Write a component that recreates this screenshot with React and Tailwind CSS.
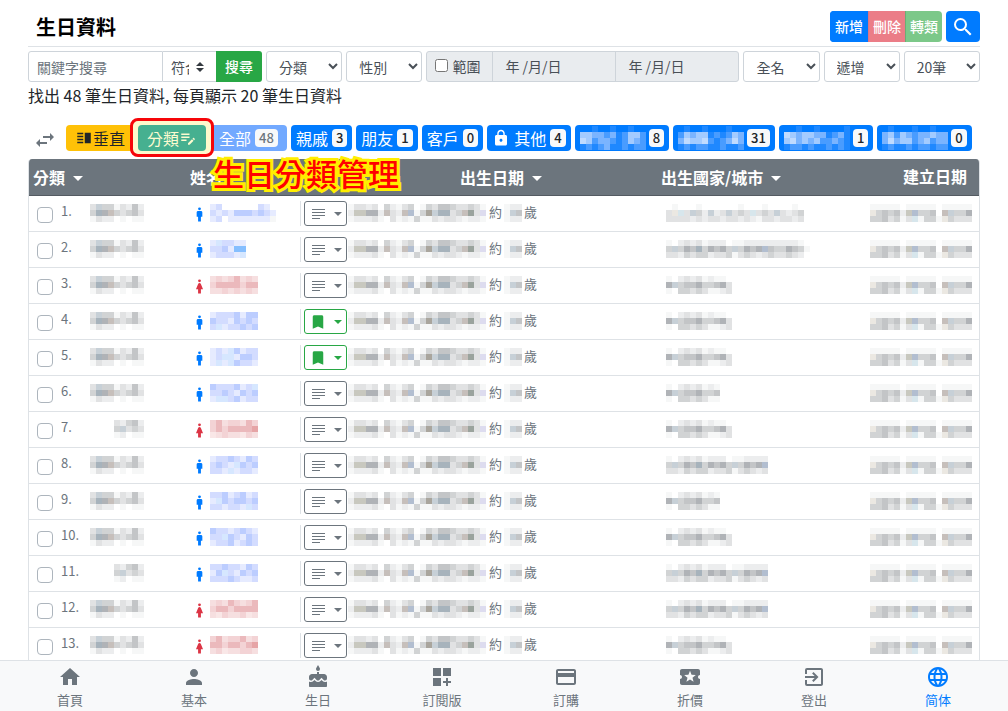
import React from "react";
import {
  MdBookmark,
  MdCake,
  MdCreditCard,
  MdDashboardCustomize,
  MdEditNote,
  MdExitToApp,
  MdHome,
  MdLanguage,
  MdLocalActivity,
  MdLock,
  MdMan,
  MdPerson,
  MdSearch,
  MdSwapHoriz,
  MdVerticalSplit,
  MdWoman
} from "react-icons/md";

// One letter per 6px tile, "." leaves the tile empty
const TILES = {
  a: "#f6f7f7", b: "#ecedee", c: "#e1e2e3", d: "#d1d3d4", e: "#c3c5c7", f: "#b0b3b7",
  g: "#c7d0d7", h: "#a7b3bc", i: "#c6bfbb", j: "#ebe8e2", k: "#d7e6ec", l: "#b2bed0",
  m: "#c8c8bf", n: "#9aa39d", o: "#a9a59d", u: "#dddcef",
  1: "#e6ebff", 2: "#d3dcff", 3: "#bccdff", 4: "#86bfff", 5: "#d6e7ff",
  p: "#f9e7e7", q: "#f3d3d5", r: "#ebb9bc", s: "#f6dfe0", t: "#e6a4a6",
  v: "#c0dbff", w: "#a3cbff", x: "#7ab4ff", y: "#499cff", z: "#1f88ff"
};

const CATEGORY = ["cgddacbeb", "dhfidcdec", "acbb.a.aa"];
const CATEGORY_SHORT = ["cbdeb", "dgcdc", "ab.aa"];
const BIRTH = ["accbc.dbacd.adceedccdca", "bmmffbicbiladoghhcdincu", "abbbca.cabadaacbccbabba"];
const AGE = ["abb", "age", "abb"];
const CREATED = ["aaaaa.aaaaa.aaaaa", "jdedebmldde.igddf", "ddecdackaddajdccc"];
const CITY_LIGHT = [".a...a......a...a....a.", "cjkcgdbgbcgcdckcdcgcbcd", "ccccbcbccbccbcbaccbccbc"];
const CITY_DARK = ["a.bcbcabbb.aabbbbbbbbba.", "dgdfehdfefdgdfefleddfeda", "ccbdcddbccdacdcbcdccdcb."];
const AREA = ["a.bcbcabaa.", "fgdeefddefc", "a.ddcdcaabc"];

const people = [
  { city: CITY_LIGHT, name: ["12......21.", "21213332321", "12.1111111a"] },
  { city: CITY_DARK, name: ["152211", "223144", "122215"] },
  { female: true, city: AREA, name: ["sqsqrsqs", "qrrrrqrr", "ssqsqsqs"] },
  { marked: true, city: AREA, name: ["12223133", "32213232", "25122323"] },
  { marked: true, city: AREA, name: ["12153122", "12551332", "15153221"] },
  { city: AREA, width: 9, name: ["32223125", "22321323", "15523122"] },
  { short: true, female: true, city: AREA, name: ["qrsqqsrq", "qrqrrrrt", "psqsspqs"] },
  { city: CITY_DARK, width: 17, name: ["12232132", "23215323", "22151221"] },
  { city: AREA, width: 9, name: ["22312312", "15323323", "22122152"] },
  { city: AREA, name: ["32212321", "22532132", "12231232"] },
  { short: true, city: CITY_DARK, width: 17, name: ["22322132", "13521323", "22232112"] },
  { female: true, city: CITY_DARK, width: 17, name: ["sqsrqsqr", "qrrqrrrr", "spqssqps"] },
  { female: true, city: AREA, name: ["qrsqqrsq", "rrqrrqrt", "sqpssqqs"] }
];

const tags = [
  { label: "親戚", count: 3 },
  { label: "朋友", count: 1 },
  { label: "客戶", count: 0 },
  { label: "其他", count: 4, locked: true },
  { count: 8, tiles: ["..z..z..z..", "wwxxyxzywwy", "vwyxxyzywxy", "zyzyxzzyzyy"] },
  { count: 31, tiles: [".z..z...z..", "ywxwwzyzywx", "xvwwvyzyxvx", "zyzyyzzyzzy"] },
  { count: 1, tiles: ["..z..z....z", "vwxwwxxzyxz", "wvxwxwyyxyz", "zyyzyzzyzyz"] },
  { count: 0, tiles: [".z...z..z..", "xwywxyxxwxx", "xvxwwyxwyxx", "zyzzyzyyzyy"] }
];

const nav = [
  { label: "首頁", icon: MdHome },
  { label: "基本", icon: MdPerson },
  { label: "生日", icon: MdCake },
  { label: "訂閱版", icon: MdDashboardCustomize },
  { label: "訂購", icon: MdCreditCard },
  { label: "折價", icon: MdLocalActivity },
  { label: "登出", icon: MdExitToApp },
  { label: "简体", icon: MdLanguage, active: true }
];

function Mosaic({ rows, className = "" }) {
  const cols = rows[0].length;
  return (
    <svg
      width={cols * 6}
      height={rows.length * 6}
      shapeRendering="crispEdges"
      aria-hidden="true"
      className={`shrink-0 ${className}`}
    >
      {rows.map((row, y) =>
        [...row].map((tile, x) =>
          tile === "." ? null : (
            <rect key={`${x}-${y}`} x={x * 6} y={y * 6} width="6" height="6" fill={TILES[tile]} />
          )
        )
      )}
    </svg>
  );
}

function Caret({ className = "" }) {
  return (
    <svg viewBox="0 0 10 5" className={`inline-block fill-current ${className}`} aria-hidden="true">
      <path d="M0 0h10L5 5z" />
    </svg>
  );
}

function FilterSelect({ label, options }) {
  return (
    <select
      aria-label={label}
      className="h-[31px] flex-1 min-w-0 rounded-[3px] border border-[#ced4da] bg-white px-2 text-sm text-[#495057]"
    >
      {options.map((option) => (
        <option key={option}>{option}</option>
      ))}
    </select>
  );
}

function Badge({ children }) {
  return (
    <span className="h-[18px] rounded bg-[#f8f9fa] px-1 text-[13px] leading-[18px] font-medium text-[#212529]">
      {children}
    </span>
  );
}

export default function App() {
  return (
    <div className="h-screen flex flex-col bg-white text-[#212529] font-['Noto_Sans_CJK_TC','Noto_Sans',sans-serif]">
      <main className="flex-1 min-h-0 overflow-y-auto [scrollbar-width:none] px-7 pt-[11px]">
        {/* Title and actions */}
        <header className="flex items-center justify-between border-b border-[#dee2e6] pb-1">
          <h1 className="pl-2 text-xl leading-[31px] font-bold text-black">生日資料</h1>
          <div className="flex gap-1 text-sm font-medium text-white">
            <div className="flex h-[31px] overflow-hidden rounded">
              <button className="border border-[#007bff] bg-[#007bff] px-1 pb-0.5">新增</button>
              <button className="border-l border-[#e07682] bg-[#eb7d87] px-1 pb-0.5">刪除</button>
              <button className="border-l border-[#6bae75] bg-[#7cc889] px-1 pb-0.5">轉類</button>
            </div>
            <button aria-label="搜尋" className="flex h-[31px] w-[34px] items-center justify-center rounded bg-[#007bff]">
              <MdSearch className="size-6" />
            </button>
          </div>
        </header>

        {/* Filters */}
        <form className="mt-1 flex gap-1 text-sm text-[#495057]" onSubmit={(e) => e.preventDefault()}>
          <div className="flex h-[31px] w-[234px]">
            <input
              aria-label="關鍵字搜尋"
              placeholder="關鍵字搜尋"
              className="min-w-0 flex-1 rounded-l-[3px] border border-[#ced4da] px-2 placeholder:text-[#6c757d]"
            />
            <div className="relative w-[53px] border-y border-[#ced4da]">
              <select aria-label="比對方式" className="h-full w-[26px] appearance-none overflow-hidden pl-2">
                <option>符合</option>
              </select>
              <svg viewBox="0 0 8 10" className="pointer-events-none absolute top-2.5 right-3 h-2.5 w-2 fill-[#343a40]">
                <path d="M4 0l4 4H0zM0 6h8l-4 4z" />
              </svg>
            </div>
            <button className="w-[46px] rounded-r-[3px] bg-[#28a745] pb-0.5 font-medium text-white">搜尋</button>
          </div>
          <FilterSelect label="分類" options={["分類"]} />
          <FilterSelect label="性別" options={["性別", "男", "女"]} />
          <div className="flex h-[31px] w-[313px] rounded-[3px] border border-[#ced4da] bg-[#e9ecef]">
            <label className="flex w-[66px] items-center gap-1 border-r border-[#ced4da] pb-0.5 pl-2">
              <input type="checkbox" className="size-[13px]" />
              範圍
            </label>
            <input aria-label="開始日期" disabled defaultValue="年 /月/日" className="min-w-0 flex-1 border-r border-[#ced4da] px-3 pb-0.5" />
            <input aria-label="結束日期" disabled defaultValue="年 /月/日" className="min-w-0 flex-1 px-3 pb-0.5" />
          </div>
          <FilterSelect label="姓名格式" options={["全名"]} />
          <FilterSelect label="排序" options={["遞增", "遞減"]} />
          <FilterSelect label="每頁筆數" options={["20筆"]} />
        </form>

        <p className="mt-px text-base leading-6">找出 48 筆生日資料, 每頁顯示 20 筆生日資料</p>

        {/* Category tags */}
        <div className="mt-[18px] flex h-[26px] gap-1 whitespace-nowrap text-base leading-[26px] text-white">
          <button aria-label="切換" className="flex w-[34px] items-center justify-center pt-1 text-[#6c757d]">
            <MdSwapHoriz className="size-6" />
          </button>
          <button className="flex items-center rounded bg-[#ffc107] px-[9px] text-[#212529]">
            <MdVerticalSplit className="size-[18px]" />
            垂直
          </button>
          <div className="relative z-10">
            <span className="absolute -inset-x-2 -top-[7px] -bottom-1.5 rounded-lg border-3 border-[#f60509] bg-[#fff9cc]" />
            <button className="relative flex h-[26px] items-center rounded bg-[#46b090] px-[9px] text-[#fdfbd0]">
              分類
              <MdEditNote className="size-[18px]" />
            </button>
            <strong className="pointer-events-none absolute top-[26px] left-[75px] text-[31px] leading-[44px] font-medium text-[#ff0000] [-webkit-text-stroke:6px_#ffee00] [paint-order:stroke_fill] [stroke-linejoin:round]">
              生日分類管理
            </strong>
          </div>
          <button className="flex items-center gap-1 rounded bg-[#72a9ff] px-[9px]">
            全部
            <span className="h-[18px] rounded bg-[#f8f9fa] px-1 text-[13px] leading-[18px] font-medium text-[#6c757d]">48</span>
          </button>
          {tags.map((tag, index) =>
            tag.tiles ? (
              <button key={index} aria-label={`分類 ${tag.count}`} className="flex items-center gap-[3px] rounded bg-[#007bff] px-[5px]">
                <Mosaic rows={tag.tiles} />
                <Badge>{tag.count}</Badge>
              </button>
            ) : (
              <button key={index} className="flex items-center gap-1 rounded bg-[#007bff] px-[5px]">
                {tag.locked && <MdLock className="size-[18px]" />}
                {tag.label}
                <Badge>{tag.count}</Badge>
              </button>
            )
          )}
        </div>

        {/* Birthday list */}
        <div className="mt-2 overflow-hidden rounded-t border-x border-[#dee2e6]">
          <table className="w-full table-fixed border-collapse text-[13px] text-[#6c757d]">
            <colgroup>
              <col className="w-[156px]" />
              <col className="w-[115px]" />
              <col className="w-[356px]" />
              <col />
              <col className="w-[115px]" />
            </colgroup>
            <thead className="bg-[#6c757d] text-left text-base text-white">
              <tr className="h-9 border-b border-[#545b62]">
                <th className="pl-1 font-bold">分類 <Caret className="ml-1 mb-0.5 h-[5px] w-2.5" /></th>
                <th className="pl-[5px] font-bold">姓名</th>
                <th className="pl-40 font-bold">出生日期 <Caret className="ml-1 mb-0.5 h-[5px] w-2.5" /></th>
                <th className="pl-[5px] font-bold">出生國家/城市 <Caret className="ml-1 mb-0.5 h-[5px] w-2.5" /></th>
                <th className="pr-3 pb-0.5 text-right font-bold">建立日期</th>
              </tr>
            </thead>
            <tbody>
              {people.map((person, index) => (
                <tr key={index} className="h-9 border-b border-[#dee2e6] align-top">
                  <td className="pt-2">
                    <div className="flex pl-2">
                      <input
                        type="checkbox"
                        aria-label={`選取 ${index + 1}`}
                        className="mt-[3px] size-4 appearance-none rounded border border-[#adb5bd] bg-white"
                      />
                      <span className="w-[29px] pl-2 leading-[14px]">{index + 1}.</span>
                      {person.short ? (
                        <Mosaic rows={CATEGORY_SHORT} className="ml-8" />
                      ) : (
                        <Mosaic rows={CATEGORY} className="ml-2" />
                      )}
                    </div>
                  </td>
                  <td className="pt-2">
                    <div className="flex gap-0.5 pl-1.5">
                      {person.female ? (
                        <MdWoman className="mt-0.5 size-[17px] text-[#dc3545]" />
                      ) : (
                        <MdMan className="mt-0.5 size-[17px] text-[#007bff]" />
                      )}
                      <Mosaic rows={person.name} />
                    </div>
                  </td>
                  <td className="pt-[5px]">
                    <div className="flex h-[25px] items-center border-l border-[#dee2e6] pl-[3px]">
                      <button
                        aria-label="標記"
                        className={`mr-px flex h-[25px] w-[43px] items-center justify-between rounded-[3px] border pl-1 pr-1 ${
                          person.marked ? "border-[#28a745] text-[#28a745]" : "border-[#6c757d]"
                        }`}
                      >
                        {person.marked ? (
                          <MdBookmark className="mt-0.5 size-[18px]" />
                        ) : (
                          <svg viewBox="0 0 18 18" shapeRendering="crispEdges" className="mt-0.5 size-[18px] fill-current">
                            <path d="M3 4h13v1H3zM3 7h13v1H3zM3 10h13v1H3zM3 13h8v1H3z" />
                          </svg>
                        )}
                        <Caret className="mt-0.5 h-1 w-2" />
                      </button>
                      <Mosaic rows={BIRTH} />
                      <span className="pb-0.5 pl-[3px] leading-4">約</span>
                      <Mosaic rows={AGE} className="mx-0.5" />
                      <span className="pb-0.5 leading-4">歲</span>
                    </div>
                  </td>
                  <td className="pt-2 pl-2.5">
                    <Mosaic rows={person.width ? person.city.map((r) => r.slice(0, person.width)) : person.city} />
                  </td>
                  <td className="pt-2 pr-[7px]">
                    <Mosaic rows={CREATED} className="ml-auto" />
                  </td>
                </tr>
              ))}
            </tbody>
          </table>
        </div>
      </main>

      <nav className="grid h-[51px] shrink-0 grid-cols-8 border-t border-[#dee2e6] bg-[#f8f9fa] px-2">
        {nav.map(({ label, icon: Icon, active }) => (
          <a
            key={label}
            href="#"
            className={`flex flex-col items-center pt-1 text-[13px] leading-[22px] ${active ? "text-[#007bff]" : "text-[#6c757d]"}`}
          >
            <Icon className="size-6 shrink-0" />
            {label}
          </a>
        ))}
      </nav>
    </div>
  );
}
